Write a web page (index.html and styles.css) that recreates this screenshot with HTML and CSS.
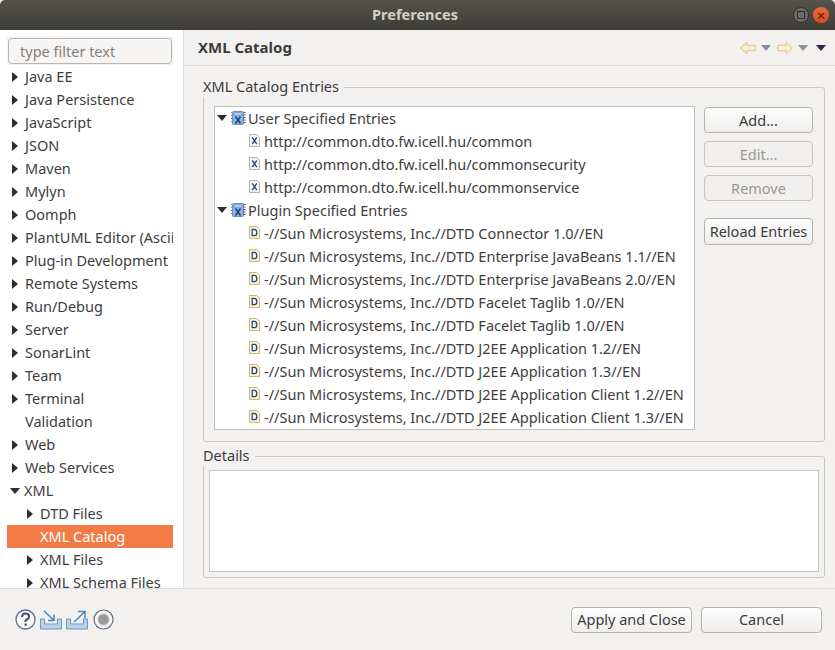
FILE: index.html
```html
<!DOCTYPE html>
<html lang="en">
<head>
<meta charset="utf-8">
<title>Preferences</title>
<link rel="stylesheet" href="styles.css">
</head>
<body>
<svg class="defs" width="0" height="0" aria-hidden="true">
  <symbol id="cat" viewBox="0 0 16 16">
    <rect x="1.500" y="1.500" width="11" height="13" rx="1" fill="#8fb2e4" stroke="#6a8fc4"/>
    <rect x="3.500" y="3" width="7" height="2" fill="#e4ecf8" stroke="#6c8ebd" stroke-width="0.700"/>
    <path d="M12.500 2.500h2M12.500 5h2M12.500 7.500h2M12.500 10h2M12.500 12.500h2" stroke="#44505f" stroke-width="1"/>
    <path d="M0.500 2v1M0.500 5v1M0.500 8v1M0.500 11v1" stroke="#6f7f95" stroke-width="1"/>
    <path d="M4.500 6.500l5 7M9.500 6.500l-5 7" stroke="#1f3f77" stroke-width="1.400" fill="none"/>
  </symbol>
  <symbol id="xdoc" viewBox="0 0 12 14">
    <path d="M.5.5h8l3 3v10h-11z" fill="#f4f6fa" stroke="#a9a99a"/>
    <path d="M3.500 3.500l5 7.500M8.500 3.500l-5 7.500" stroke="#24457e" stroke-width="1.400" fill="none"/>
  </symbol>
  <symbol id="ddoc" viewBox="0 0 12 14">
    <path d="M.5.5h8l3 3v10h-11z" fill="#f9f5e2" stroke="#cda84f"/>
    <path d="M3.500 3.500h2.500q2.500 0 2.500 3.500t-2.500 3.500h-2.500z" fill="none" stroke="#24457e" stroke-width="1.400"/>
  </symbol>
</svg>
<div class="window">
  <header class="titlebar">
    <span class="title">Preferences</span>
    <span class="winbtns">
      <span class="winbtn max"><span class="maxglyph"></span></span>
      <span class="winbtn close">×</span>
    </span>
  </header>
  <div class="main">
    <aside class="sidebar">
      <div class="filter"><div class="filter-input">type filter text</div></div>
      <ul class="tree">
        <li class="node"><i class="arrow"></i>Java EE</li>
        <li class="node"><i class="arrow"></i>Java Persistence</li>
        <li class="node"><i class="arrow"></i>JavaScript</li>
        <li class="node"><i class="arrow"></i>JSON</li>
        <li class="node"><i class="arrow"></i>Maven</li>
        <li class="node"><i class="arrow"></i>Mylyn</li>
        <li class="node"><i class="arrow"></i>Oomph</li>
        <li class="node"><i class="arrow"></i>PlantUML Editor (Ascii</li>
        <li class="node"><i class="arrow"></i>Plug-in Development</li>
        <li class="node"><i class="arrow"></i>Remote Systems</li>
        <li class="node"><i class="arrow"></i>Run/Debug</li>
        <li class="node"><i class="arrow"></i>Server</li>
        <li class="node"><i class="arrow"></i>SonarLint</li>
        <li class="node"><i class="arrow"></i>Team</li>
        <li class="node"><i class="arrow"></i>Terminal</li>
        <li class="node"><i class="noarrow"></i>Validation</li>
        <li class="node"><i class="arrow"></i>Web</li>
        <li class="node"><i class="arrow"></i>Web Services</li>
        <li class="node"><i class="arrow open"></i>XML</li>
        <li class="node sub"><i class="arrow"></i>DTD Files</li>
        <li class="node sub selected"><i class="noarrow"></i>XML Catalog</li>
        <li class="node sub"><i class="arrow"></i>XML Files</li>
        <li class="node sub"><i class="arrow"></i>XML Schema Files</li>
      </ul>
    </aside>
    <section class="content">
      <div class="pagehead">
        <h1 class="pagetitle">XML Catalog</h1>
        <div class="navicons">
          <svg class="nav" width="16" height="14" viewBox="0 0 16 14"><path d="M.8 7l6-6v3.300h8.500v5.400H6.800v3.300z" fill="#fdf0d0" stroke="#e3c07e"/></svg>
          <i class="drop grey"></i>
          <svg class="nav next" width="16" height="14" viewBox="0 0 16 14"><path d="M15.200 7l-6-6v3.300H.7v5.400h8.500v3.300z" fill="#fdf0d0" stroke="#e3c07e"/></svg>
          <i class="drop grey"></i>
          <i class="drop dark"></i>
        </div>
      </div>
      <div class="pagebody">
        <fieldset class="group entries">
          <legend class="legend">XML Catalog Entries</legend>
          <div class="entries-row">
            <ul class="catalog">
              <li class="crow"><i class="arrow open"></i><svg class="ico16"><use href="#cat"/></svg>User Specified Entries</li>
              <li class="crow leaf"><svg class="ico12"><use href="#xdoc"/></svg>http://common.dto.fw.icell.hu/common</li>
              <li class="crow leaf"><svg class="ico12"><use href="#xdoc"/></svg>http://common.dto.fw.icell.hu/commonsecurity</li>
              <li class="crow leaf"><svg class="ico12"><use href="#xdoc"/></svg>http://common.dto.fw.icell.hu/commonservice</li>
              <li class="crow"><i class="arrow open"></i><svg class="ico16"><use href="#cat"/></svg>Plugin Specified Entries</li>
              <li class="crow leaf"><svg class="ico12"><use href="#ddoc"/></svg>-//Sun Microsystems, Inc.//DTD Connector 1.0//EN</li>
              <li class="crow leaf"><svg class="ico12"><use href="#ddoc"/></svg>-//Sun Microsystems, Inc.//DTD Enterprise JavaBeans 1.1//EN</li>
              <li class="crow leaf"><svg class="ico12"><use href="#ddoc"/></svg>-//Sun Microsystems, Inc.//DTD Enterprise JavaBeans 2.0//EN</li>
              <li class="crow leaf"><svg class="ico12"><use href="#ddoc"/></svg>-//Sun Microsystems, Inc.//DTD Facelet Taglib 1.0//EN</li>
              <li class="crow leaf"><svg class="ico12"><use href="#ddoc"/></svg>-//Sun Microsystems, Inc.//DTD Facelet Taglib 1.0//EN</li>
              <li class="crow leaf"><svg class="ico12"><use href="#ddoc"/></svg>-//Sun Microsystems, Inc.//DTD J2EE Application 1.2//EN</li>
              <li class="crow leaf"><svg class="ico12"><use href="#ddoc"/></svg>-//Sun Microsystems, Inc.//DTD J2EE Application 1.3//EN</li>
              <li class="crow leaf"><svg class="ico12"><use href="#ddoc"/></svg>-//Sun Microsystems, Inc.//DTD J2EE Application Client 1.2//EN</li>
              <li class="crow leaf"><svg class="ico12"><use href="#ddoc"/></svg>-//Sun Microsystems, Inc.//DTD J2EE Application Client 1.3//EN</li>
            </ul>
            <div class="actions">
              <button class="btn">Add...</button>
              <button class="btn" disabled>Edit...</button>
              <button class="btn" disabled>Remove</button>
              <button class="btn reload">Reload Entries</button>
            </div>
          </div>
        </fieldset>
        <fieldset class="group details">
          <legend class="legend">Details</legend>
          <div class="details-box"></div>
        </fieldset>
      </div>
    </section>
  </div>
  <footer class="footer">
    <div class="tools">
      <svg width="21" height="21" viewBox="0 0 21 21"><circle cx="10.500" cy="10.500" r="9.500" fill="#fafafa" stroke="#5a6f92" stroke-width="1.300"/><path d="M7 8q0-3.500 3.500-3.500t3.500 3q0 2-2 3t-1.500 2.500" fill="none" stroke="#3d4f72" stroke-width="2"/><rect x="9.500" y="14.500" width="2.200" height="2.200" fill="#3d4f72"/></svg>
      <svg class="tool-in" width="22" height="20" viewBox="0 0 22 20"><path d="M.5 9v10h21V9h-4v5h-13V9z" fill="#bcd2ea" stroke="#6d95c0"/><path d="M4 1l9.500 9M14 4.500v6H8" fill="none" stroke="#4b86bd" stroke-width="1.500"/></svg>
      <svg class="tool-out" width="22" height="20" viewBox="0 0 22 20"><path d="M.5 9v10h21V9h-4v5h-13V9z" fill="#bcd2ea" stroke="#6d95c0"/><path d="M8 12L18.500 2M12 1.500h7V8" fill="none" stroke="#4b86bd" stroke-width="1.500"/></svg>
      <svg class="tool-rec" width="21" height="21" viewBox="0 0 21 21"><circle cx="10.500" cy="10.500" r="9.500" fill="#f6f6f6" stroke="#66717f" stroke-width="1.200"/><circle cx="10.500" cy="10.500" r="5.500" fill="#9a9a9a" stroke="#bdbdbd"/></svg>
    </div>
    <div class="footer-actions">
      <button class="btn wide">Apply and Close</button>
      <button class="btn wide">Cancel</button>
    </div>
  </footer>
</div>
</body>
</html>
```
FILE: styles.css
```css
* { box-sizing: border-box; }
html, body { margin: 0; padding: 0; }
body { font-family: "Noto Sans", "Open Sans", sans-serif; font-size: 14px; color: #3c3c3c; background: #f2f1f0; }
.defs { display: block; height: 0; }
ul { list-style: none; margin: 0; padding: 0; }
i { display: inline-block; font-style: normal; flex: none; }

.window { width: 835px; height: 650px; display: flex; flex-direction: column; overflow: hidden; }

.titlebar { height: 30px; flex: none; display: flex; align-items: center; justify-content: center; padding: 0 0 2px 0; background: linear-gradient(#55534c, #3d3c37); border-radius: 5px 5px 0 0; }
.title { font-weight: 700; font-size: 14.500px; color: #d5d1c8; margin-left: -5px; }
.winbtns { position: absolute; left: 793px; top: 7px; display: flex; gap: 4px; }
.winbtn { width: 16px; height: 16px; border-radius: 50%; display: flex; align-items: center; justify-content: center; }
.max { background: #6b6a64; border: 1px solid #33322e; }
.maxglyph { width: 8px; height: 8px; border: 1px solid #2f2e2b; }
.close { background: linear-gradient(#f0683a, #d84d1e); color: #3a2012; font-size: 15px; line-height: 1; }

.main { flex: none; height: 558px; display: flex; }

.sidebar { width: 184px; flex: none; background: #fff; border-right: 1px solid #e2e0de; padding: 7px 10px 0 7px; display: flex; flex-direction: column; overflow: hidden; }
.filter { background: #f2f1f0; padding: 1px; height: 28px; flex: none; }
.filter-input { height: 26px; border: 1px solid #b9b6b1; border-radius: 4px; background: #f6f5f4; color: #82807c; font-size: 14.500px; line-height: 24px; padding-left: 11px; }
.tree { white-space: nowrap; overflow: hidden; flex: 1; }
.node { height: 23px; line-height: 23px; display: flex; align-items: center; font-size: 14.500px; color: #3d3d3d; padding-left: 3px; overflow: hidden; }
.node.sub { padding-left: 18px; }
.node.selected { background: #f27b48; color: #fff; }
.arrow { width: 0; height: 0; border-left: 6px solid #2e2e2e; border-top: 5.500px solid transparent; border-bottom: 5.500px solid transparent; margin: 0 7px 0 2px; }
.arrow.open { border-top: 6px solid #2e2e2e; border-left: 5.500px solid transparent; border-right: 5.500px solid transparent; border-bottom: 0; margin: 0 4px 0 0; }
.noarrow { width: 15px; }

.content { flex: 1; display: flex; flex-direction: column; min-width: 0; }
.pagehead { height: 36px; flex: none; display: flex; align-items: center; justify-content: space-between; border-bottom: 1px solid #dedcda; padding: 0 9px 0 14px; }
.pagetitle { margin: 0 0 2px; font-size: 15px; font-weight: 700; color: #3c3c3c; }
.navicons { display: flex; align-items: center; }
.nav { display: block; }
.nav.next { margin-left: 6px; }
.drop { width: 0; height: 0; border-top: 6px solid #8f8f8f; border-left: 5.500px solid transparent; border-right: 5.500px solid transparent; margin-left: 5px; }
.drop.dark { border-top-color: #2f2352; margin-left: 8px; }

.pagebody { flex: 1; padding: 11px 10px 0 19px; display: flex; flex-direction: column; gap: 4px; }
.group { margin: 0; padding: 0; border: 1px solid #c9c7c3; border-radius: 3px; min-width: 0; }
.legend { padding: 0 5px 0 0; margin-left: -1px; height: 20px; line-height: 18px; font-size: 14.500px; color: #3c3c3c; }

.entries { height: 365px; }
.entries-row { display: flex; padding: 10px 11px 0 10px; }
.catalog { width: 481px; height: 324px; margin-top: -1px; background: #fff; border: 1px solid #c4c2bd; overflow: hidden; white-space: nowrap; flex: none; }
.crow { height: 23px; padding-bottom: 2px; display: flex; align-items: center; font-size: 14.500px; color: #3d3d3d; padding-left: 2px; }
.crow .ico16 { width: 16px; height: 16px; margin-right: 1px; flex: none; }
.crow.leaf { padding-left: 34px; }
.ico12 { width: 11px; height: 15px; margin-right: 4px; flex: none; }

.actions { margin-left: 9px; width: 109px; display: flex; flex-direction: column; gap: 8px; }
.btn { height: 26px; padding: 0; border: 1px solid #b5b2ac; border-radius: 4px; background: linear-gradient(#fdfdfd, #efeeec); font: inherit; font-size: 14.500px; color: #3c3c3c; }
.btn:disabled { background: #f0efed; color: #9a9996; border-color: #c7c5c1; }
.reload { margin-top: 9px; height: 27px; padding-bottom: 2px; }
.wide { width: 121px; padding-bottom: 2px; }

.details { height: 132px; }
.details-box { margin: 4px 5px 5px 5px; height: 102px; background: #fff; border: 1px solid #c9c7c3; }

.footer { flex: 1; border-top: 1px solid #dcdad7; display: flex; align-items: flex-start; justify-content: space-between; padding: 18px 13px 0 15px; }
.tools { display: flex; align-items: center; padding-top: 2px; }
.tool-in { margin-left: 4px; }
.tool-out { margin-left: 4px; }
.tool-rec { margin-left: 5px; }
.footer-actions { display: flex; gap: 9px; }
```
